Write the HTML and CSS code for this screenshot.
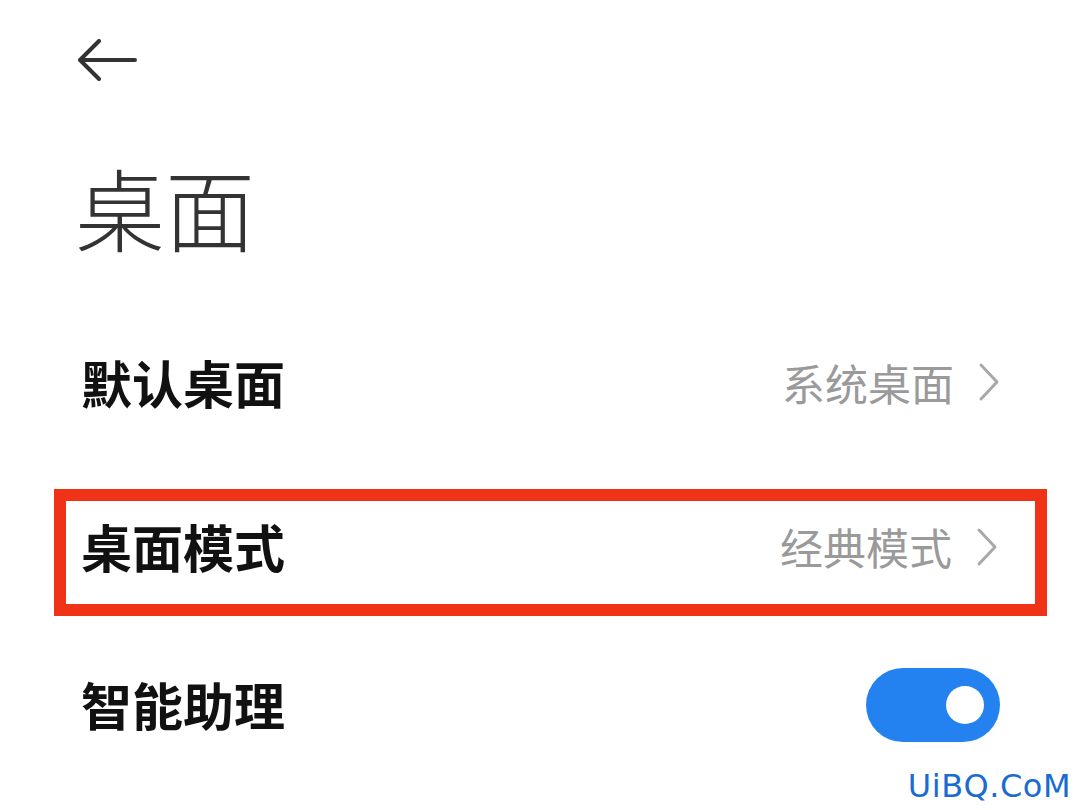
FILE: index.html
```html
<!DOCTYPE html>
<html lang="zh-CN">
<head>
<meta charset="utf-8">
<title>桌面</title>
<link rel="stylesheet" href="styles.css">
</head>
<body>
<div class="page">
  <div class="topbar">
    <svg class="back" width="60" height="42" viewBox="0 0 60 42">
      <path d="M21 2 L2 21 L21 40 M2 21 H57" fill="none" stroke="#333" stroke-width="4" stroke-linecap="round" stroke-linejoin="round"/>
    </svg>
  </div>
  <h1 class="title">桌面</h1>
  <div class="row row-first">
    <span class="label">默认桌面</span>
    <span class="value">系统桌面
      <svg class="chev" width="22" height="40" viewBox="0 0 22 40"><path d="M3 3 L19 20 L3 37" fill="none" stroke="#a8a8a8" stroke-width="3" stroke-linecap="round" stroke-linejoin="round"/></svg>
    </span>
  </div>
  <div class="row row-mark">
    <span class="label">桌面模式</span>
    <span class="value">经典模式
      <svg class="chev" width="22" height="40" viewBox="0 0 22 40"><path d="M3 3 L19 20 L3 37" fill="none" stroke="#a8a8a8" stroke-width="3" stroke-linecap="round" stroke-linejoin="round"/></svg>
    </span>
  </div>
  <div class="row row-last">
    <span class="label">智能助理</span>
    <span class="toggle"><span class="knob"></span></span>
  </div>
  <div class="watermark">UiBQ.CoM</div>
</div>
</body>
</html>
```

FILE: styles.css
```css
* { box-sizing: border-box; }
html, body {
  margin: 0;
  padding: 0;
  background: #ffffff;
}
body {
  font-family: "Noto Sans CJK SC", "Noto Sans", sans-serif;
  width: 1080px;
  height: 810px;
  overflow: hidden;
}
.page {
  position: relative;
  width: 1080px;
  height: 810px;
}
.topbar {
  height: 120px;
  display: flex;
  align-items: center;
  padding-left: 78px;
}
.back { display: block; }
.title {
  margin: 0;
  height: 184px;
  line-height: 172px;
  font-size: 90px;
  font-weight: 300;
  color: #333333;
  padding-left: 75px;
}
.row {
  display: flex;
  align-items: center;
  justify-content: space-between;
  padding: 0 80px 6px 81px;
}
.row-first { height: 162px; }
.row-mark {
  height: 127px;
  margin: 23px 33px 0 54px;
  border: 12px solid #f03317;
  padding: 0 37px 0 15px;
  padding-bottom: 12px;
}
.row-last { height: 182px; }
.label {
  font-size: 51px;
  font-weight: 700;
  color: #111111;
  line-height: 1;
}
.value {
  display: flex;
  align-items: center;
  gap: 24px;
  font-size: 43px;
  color: #9a9a9a;
  line-height: 1;
}
.row-mark .value { margin-top: 0; }
.chev { display: block; }
.toggle {
  position: relative;
  width: 134px;
  height: 74px;
  border-radius: 37px;
  background: #2481f0;
  margin-top: 2px;
}
.knob {
  position: absolute;
  right: 16px;
  top: 18px;
  width: 38px;
  height: 38px;
  border-radius: 50%;
  background: #ffffff;
}
.watermark {
  position: absolute;
  right: 9px;
  bottom: 5px;
  font-family: "DejaVu Sans", sans-serif;
  font-size: 32px;
  letter-spacing: 0.5px;
  color: #1a6cd0;
}
```
